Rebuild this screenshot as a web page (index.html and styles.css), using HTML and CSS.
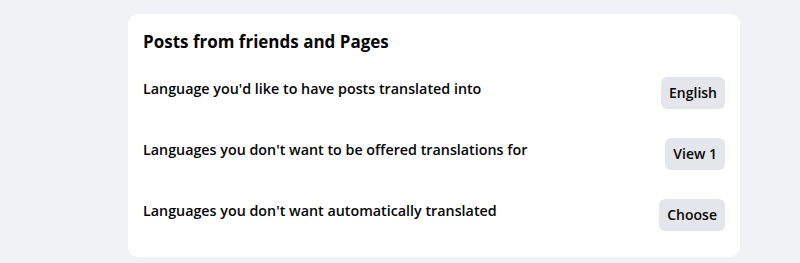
FILE: index.html
```html
<!DOCTYPE html>
<html lang="en">
<head>
    <meta charset="UTF-8">
    <title>Translation settings</title>
    <link rel="stylesheet" href="styles.css">
</head>
<body>

<div class="card">
    <h2>Posts from friends and Pages</h2>

    <div class="row">
        <span class="label">Language you'd like to have posts translated into</span>
        <button class="btn">English</button>
    </div>
    <div class="row">
        <span class="label">Languages you don't want to be offered translations for</span>
        <button class="btn">View 1</button>
    </div>
    <div class="row">
        <span class="label">Languages you don't want automatically translated</span>
        <button class="btn">Choose</button>
    </div>
</div>

</body>
</html>
```

FILE: styles.css
```css
* { box-sizing: border-box; }
body {
    margin: 0px;
    background-color: #f0f2f5;
    font-family: "Open Sans", "Noto Sans", sans-serif;
    color: #050505;
}

.card {
    margin: 14px 0 0 128px;
    width: 612px;
    height: 243px;
    background-color: #fff;
    border-radius: 10px;
    padding: 16px 15px 0 15px;
}
h2 {
    margin: 0px 0px 8px 0px;
    font-size: 17px;
    font-weight: 700;
    line-height: 24px;
}

.row {
    display: flex;
    justify-content: space-between;
    align-items: center;
    height: 61px;
}
.label {
    font-size: 14.3px;
    font-weight: 600;
    margin-bottom: 8px;
}
.btn {
    font-family: inherit;
    font-size: 14px;
    font-weight: 600;
    color: #050505;
    background-color: #e4e6eb;
    border: none;
    border-radius: 6px;
    height: 32px;
    padding: 0px 8px;
}
```
